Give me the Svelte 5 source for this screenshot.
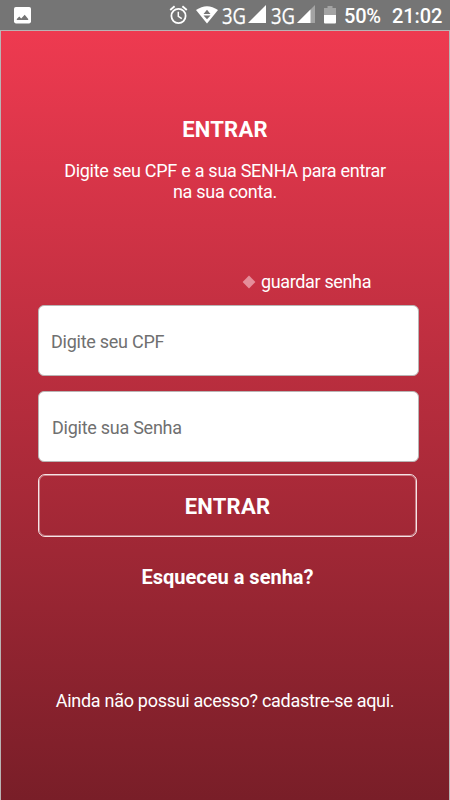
<script>
  let cpf = $state('');
  let senha = $state('');
</script>

{#snippet network(partial)}
  <svg class="net" width="45" height="30" viewBox="0 -4 45 30">
    <text x="0" y="19.5" textLength="24" lengthAdjust="spacingAndGlyphs">3G</text>
    {#if partial}
      <path d="M44 1V19H26Z" fill="#a3a3a3" />
      <path d="M39.5 5.5V19H26Z" fill="#fff" />
    {:else}
      <path d="M44 1V19H26Z" fill="#fff" />
    {/if}
  </svg>
{/snippet}

<div class="screen">
  <header class="status">
    <svg class="photo" width="17" height="17" viewBox="0 0 17 17">
      <rect width="17" height="16.4" rx="1.8" fill="#fff" />
      <path d="M2.8 13V12L5.3 9.4L7.2 11.5L10.7 7.8L14.2 12V13Z" fill="#757575" />
    </svg>
    <svg class="alarm" width="19" height="20" viewBox="0 0 19 20" fill="none" stroke="#fff">
      <circle cx="9.5" cy="11" r="7.1" stroke-width="1.8" />
      <path d="M1.2 4.9L5.6 1.3M17.8 4.9L13.4 1.3" stroke-width="1.9" />
      <path d="M9.3 6.7V11.3L12.8 13.6" stroke-width="1.5" />
    </svg>
    <svg class="wifi" width="22" height="18" viewBox="0 0 22 18">
      <path d="M0 4Q11-3.6 22 4L11 17.5Z" fill="#fff" />
      <path d="M11 3.8L14.5 8H7.5ZM7.5 9.4H14.5L11 13.2Z" fill="#757575" />
    </svg>
    {@render network(false)}
    {@render network(true)}
    <svg class="battery" width="12" height="18" viewBox="0 0 12 18">
      <path d="M3.5 0H8.5V2H12V9H0V2H3.5Z" fill="#a3a3a3" />
      <path d="M0 9H12V16.5Q12 17.5 11 17.5H1Q0 17.5 0 16.5Z" fill="#fff" />
    </svg>
    <span class="percent">50%</span>
    <span class="clock">21:02</span>
  </header>

  <main>
    <h1>ENTRAR</h1>
    <p class="intro">Digite seu CPF e a sua SENHA para entrar<br />na sua conta.</p>
    <div class="remember">
      <svg width="14" height="14" viewBox="0 0 14 14"><path d="M7 .6L13.4 7L7 13.4L.6 7Z" fill="#e58e9a" /></svg>
      <span>guardar senha</span>
    </div>
    <input class="cpf" type="text" placeholder="Digite seu CPF" bind:value={cpf} />
    <input class="senha" type="password" placeholder="Digite sua Senha" bind:value={senha} />
    <button type="button">ENTRAR</button>
    <div class="forgot">Esqueceu a senha?</div>
    <div class="signup">Ainda não possui acesso? cadastre-se aqui.</div>
  </main>
</div>

<style>
  :global(body) { margin: 0; }
  .screen {
    width: 450px;
    height: 800px;
    display: flex;
    flex-direction: column;
    overflow: hidden;
    font-family: Roboto, "Liberation Sans", sans-serif;
    color: #fff;
  }
  .status {
    height: 30px;
    flex: none;
    box-sizing: border-box;
    display: flex;
    align-items: flex-start;
    background: #757575;
    white-space: nowrap;
  }
  svg { display: block; flex: none; }
  .photo { margin: 7px 0 0 14px; }
  .alarm { margin: 5px 0 0 138px; }
  .wifi { margin: 6px 4px 0 8px; }
  .net { margin: 0 4px 0 0; }
  .net text { font: 21px "Open Sans", "Noto Sans", sans-serif; fill: #fff; stroke: #fff; stroke-width: .25px; }
  .battery { margin: 6px 0 0 4px; }
  .percent, .clock { font-size: 20px; font-weight: 500; line-height: 24px; margin-top: 4px; }
  .percent { width: 41px; margin-left: 8px; letter-spacing: -.2px; }
  .clock { margin-left: 7px; letter-spacing: -.1px; }
  main {
    flex: 1;
    box-sizing: border-box;
    display: flex;
    flex-direction: column;
    border: 1px solid #b9b4b4;
    border-bottom: 0;
    background: linear-gradient(#ee3a50, #791e28);
    text-align: center;
  }
  h1 { margin: 86px 0 0; font-size: 22px; line-height: 26px; font-weight: 700; letter-spacing: .2px; }
  .intro { margin: 17px 0 0; font-size: 18px; line-height: 21px; letter-spacing: -.28px; }
  .remember {
    display: flex;
    align-items: center;
    gap: 5px;
    margin: 69px 0 0 241px;
    height: 22px;
    font-size: 18px;
    line-height: 22px;
    letter-spacing: -.36px;
  }
  input {
    display: block;
    box-sizing: border-box;
    flex: none;
    width: 381px;
    height: 71px;
    margin: 12px 0 0 37px;
    padding: 1px 12px 0;
    border: 1px solid #b9b4b4;
    border-radius: 6px;
    outline: 0;
    background: #fff;
    color: #333;
    font: 18px Roboto, sans-serif;
    letter-spacing: -.26px;
  }
  input::placeholder { color: #707070; opacity: 1; }
  .senha { margin-top: 15px; padding-left: 13px; }
  button {
    box-sizing: border-box;
    flex: none;
    width: 379px;
    height: 63px;
    margin: 12px 0 0 37px;
    padding: 1px 0 0;
    border: 1px solid #f6e4e6;
    border-radius: 7px;
    box-shadow: inset 0 0 0 1px rgba(255, 255, 255, .4);
    background: none;
    color: #fff;
    font: 700 22px Roboto, sans-serif;
    letter-spacing: .2px;
  }
  .forgot { margin: 27px 0 0 5px; font-size: 20px; line-height: 26px; font-weight: 700; }
  .signup { margin-top: 100px; font-size: 18px; line-height: 22px; letter-spacing: -.28px; }
</style>
